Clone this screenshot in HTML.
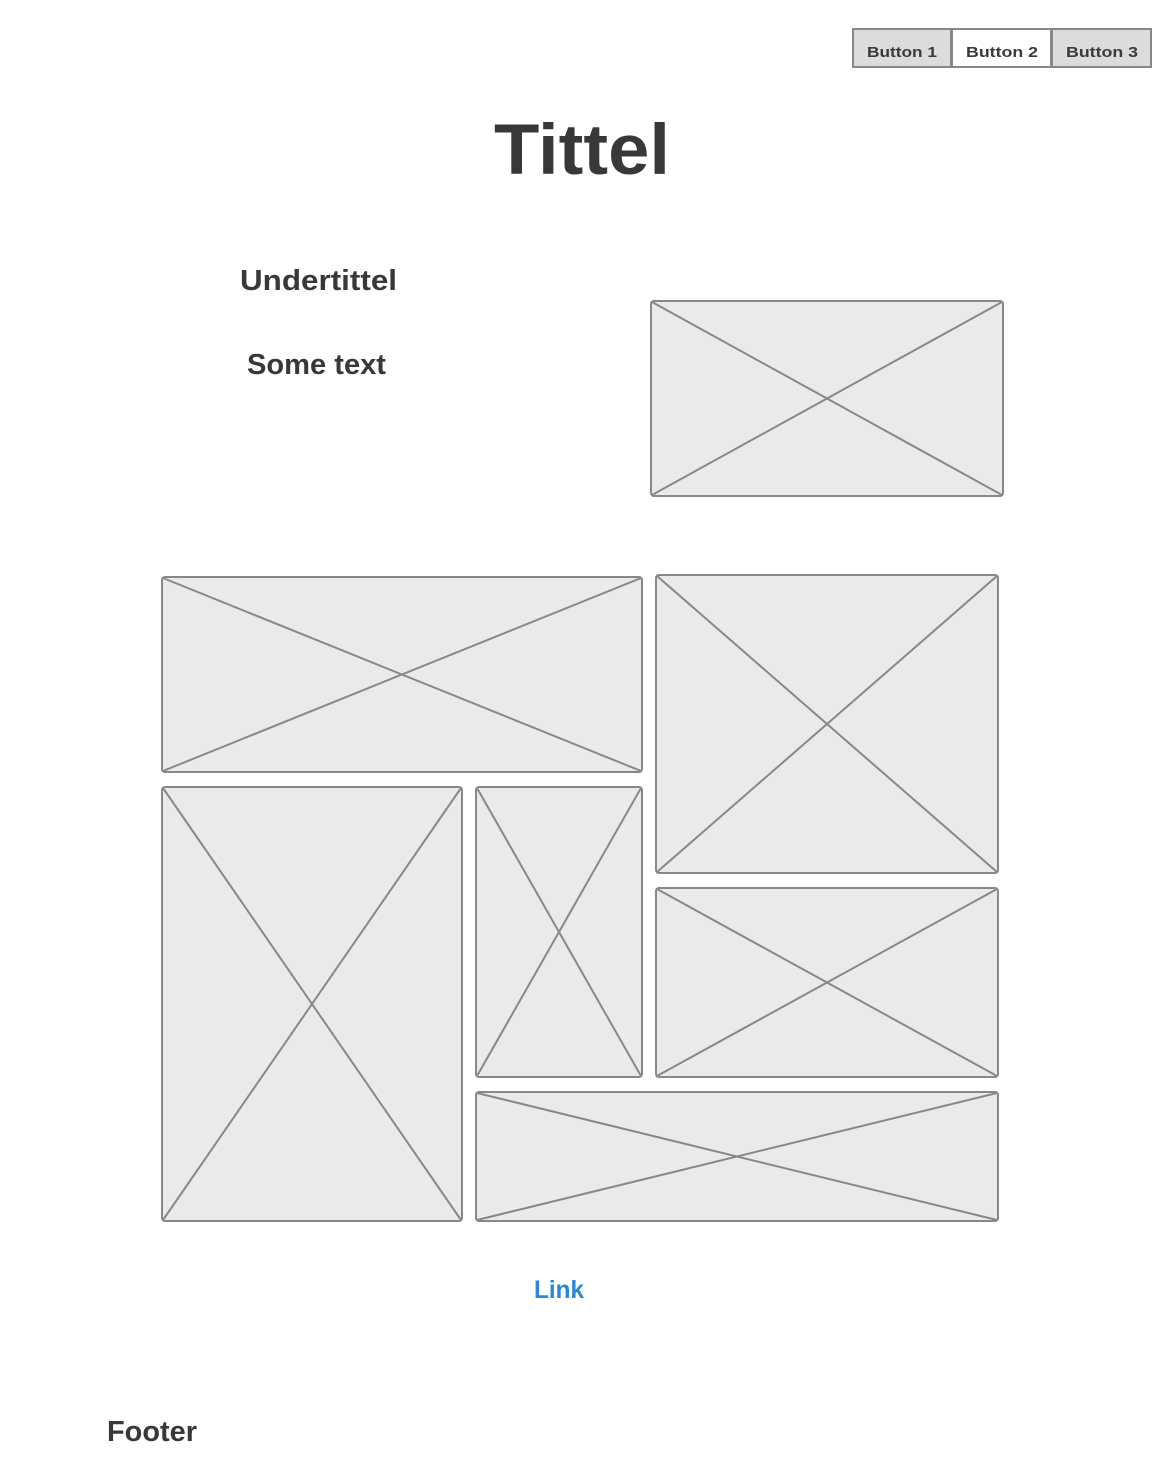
<!DOCTYPE html>
<html><head><meta charset="utf-8"><style>
html,body{margin:0;padding:0;background:#fff;}
svg{display:block}
</style></head><body>
<svg width="1172" height="1469" viewBox="0 0 1172 1469" xmlns="http://www.w3.org/2000/svg" font-family="Liberation Sans, sans-serif" font-weight="bold">
<g stroke="#888" stroke-width="2">
<rect x="853" y="29" width="98" height="38" fill="#dcdcdc"/>
<rect x="952" y="29" width="99" height="38" fill="#fff"/>
<rect x="1052" y="29" width="99" height="38" fill="#dcdcdc"/>
</g>
<g fill="#3a3a3a" font-size="15">
<text x="867" y="57" textLength="70" lengthAdjust="spacingAndGlyphs">Button 1</text>
<text x="966" y="57" textLength="72" lengthAdjust="spacingAndGlyphs">Button 2</text>
<text x="1066" y="57" textLength="72" lengthAdjust="spacingAndGlyphs">Button 3</text>
</g>
<text x="494" y="174" font-size="71" fill="#383838" textLength="176" lengthAdjust="spacingAndGlyphs">Tittel</text>
<text x="240" y="290" font-size="29" fill="#383838" textLength="157" lengthAdjust="spacingAndGlyphs">Undertittel</text>
<text x="247" y="374" font-size="29" fill="#383838" textLength="139" lengthAdjust="spacingAndGlyphs">Some text</text>
<text x="534" y="1298" font-size="25" fill="#2a88dc" textLength="50" lengthAdjust="spacingAndGlyphs">Link</text>
<text x="107" y="1441" font-size="29" fill="#383838" textLength="90" lengthAdjust="spacingAndGlyphs">Footer</text>
<g stroke="#888" stroke-width="2" fill="#eaeaea">
<rect x="651" y="301" width="352" height="195" rx="3"/>
<path d="M652 302L1002 495M1002 302L652 495" fill="none"/>
<rect x="162" y="577" width="480" height="195" rx="3"/>
<path d="M163 578L641 771M641 578L163 771" fill="none"/>
<rect x="656" y="575" width="342" height="298" rx="3"/>
<path d="M657 576L997 872M997 576L657 872" fill="none"/>
<rect x="162" y="787" width="300" height="434" rx="3"/>
<path d="M163 788L461 1220M461 788L163 1220" fill="none"/>
<rect x="476" y="787" width="166" height="290" rx="3"/>
<path d="M477 788L641 1076M641 788L477 1076" fill="none"/>
<rect x="656" y="888" width="342" height="189" rx="3"/>
<path d="M657 889L997 1076M997 889L657 1076" fill="none"/>
<rect x="476" y="1092" width="522" height="129" rx="3"/>
<path d="M477 1093L997 1220M997 1093L477 1220" fill="none"/>
</g>
</svg>
</body></html>
